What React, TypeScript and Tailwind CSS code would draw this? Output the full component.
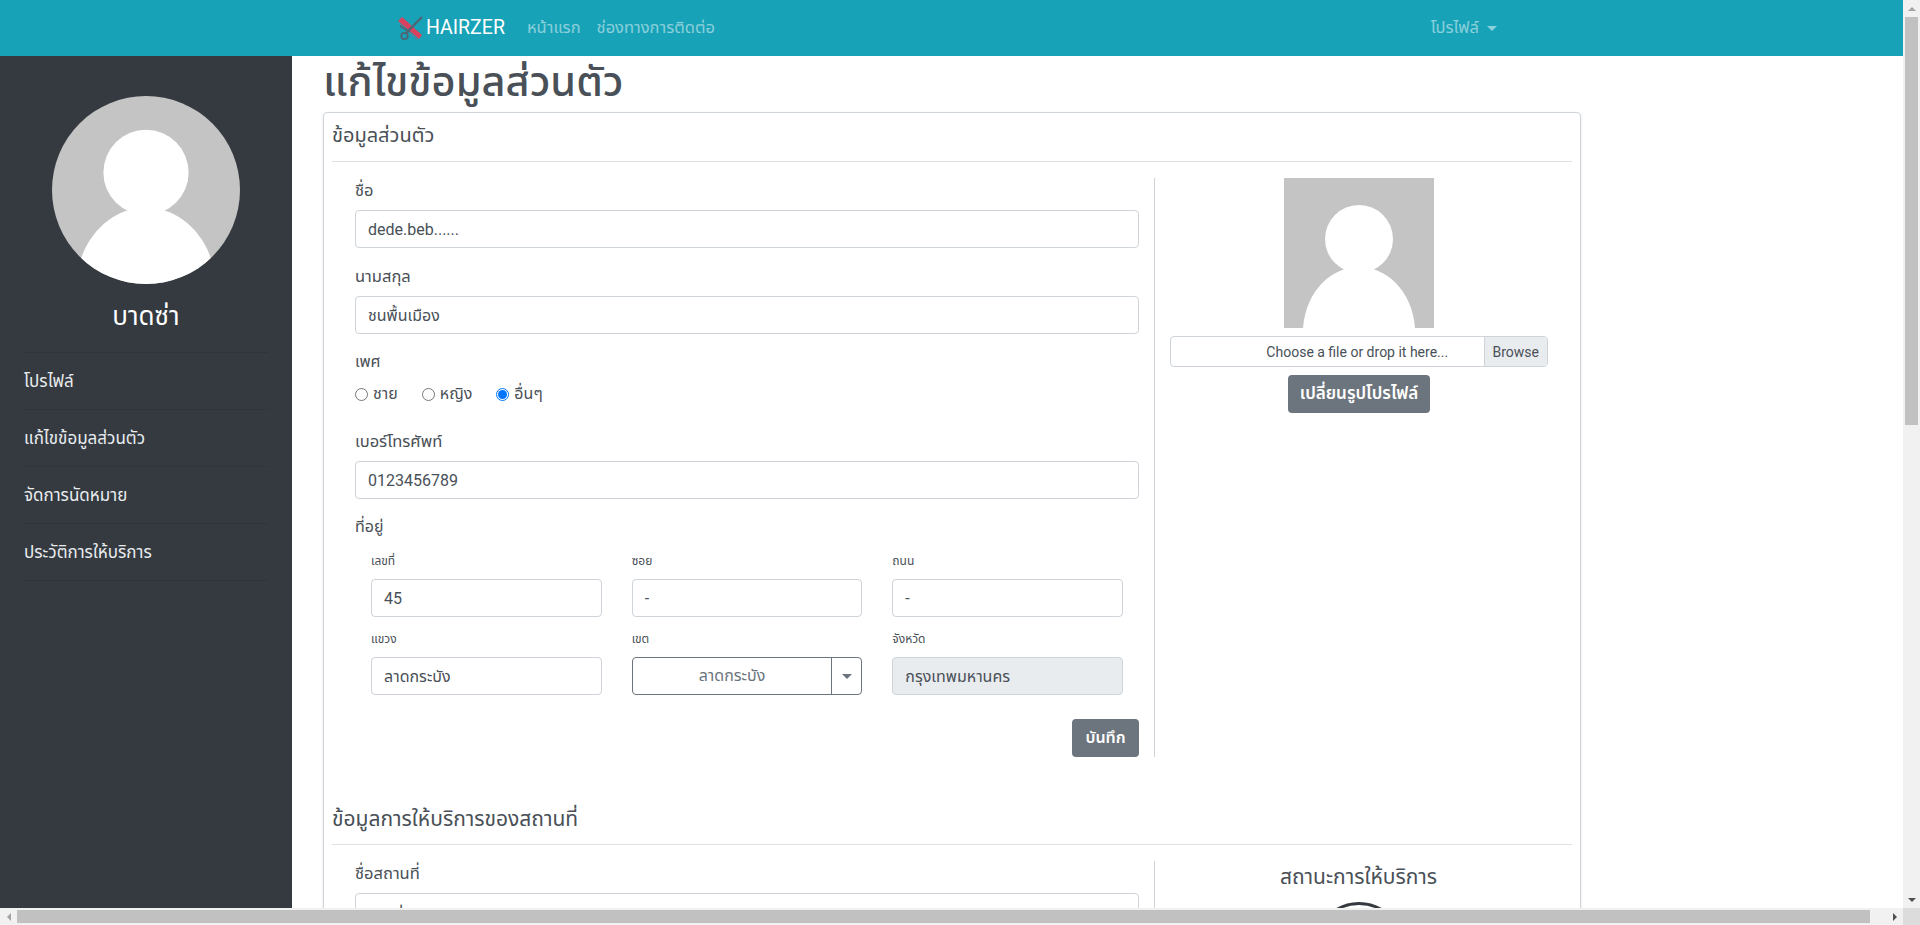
import React from 'react';

const font = { fontFamily: 'Roboto, "Noto Sans Thai", "Noto Sans", "Open Sans", sans-serif' };

const Avatar = () => (
  <svg viewBox="0 0 150 150" className="block h-full w-full">
    <rect width="150" height="150" fill="#c4c4c4" />
    <circle cx="75" cy="61" r="34" fill="#fff" />
    <path d="M19 150 C22 112 48 89 75 89 C102 89 128 112 131 150 Z" fill="#fff" />
  </svg>
);

const Logo = () => (
  <svg viewBox="0 0 26 26" className="h-[26px] w-[26px]">
    <path d="M1 6 L5 2 L25 20 L22 24 Z" fill="#d9425f" />
    <path d="M3 9 L21 25" stroke="#d9425f" strokeWidth="1" strokeDasharray="1 1" />
    <path d="M25 2 L9 18" stroke="#4d6675" strokeWidth="2.4" />
    <path d="M3 11 L13 17" stroke="#4d6675" strokeWidth="1.6" />
    <circle cx="7.5" cy="21" r="3.2" fill="none" stroke="#4d6675" strokeWidth="1.8" />
  </svg>
);

const Field = ({ label, value, className = '' }: { label: string; value: string; className?: string }) => (
  <div className={className}>
    <label className="block h-6 text-[16.5px] leading-[26px] text-[#495057]">{label}</label>
    <div className="mt-2 flex h-[38px] items-center rounded border border-[#ced4da] px-3 pt-px text-base text-[#495057]">{value}</div>
  </div>
);

const SmallField = ({ label, value, disabled }: { label: string; value: string; disabled?: boolean }) => (
  <div>
    <label className="block h-[27px] text-xs leading-[18px] text-[#495057]">{label}</label>
    <div className={`flex h-[38px] items-center rounded border border-[#ced4da] px-3 pt-px text-base text-[#495057] ${disabled ? 'bg-[#e9ecef]' : ''}`}>{value}</div>
  </div>
);

const Radio = ({ label, checked }: { label: string; checked?: boolean }) => (
  <div className="flex items-center gap-[5px] text-base leading-6 text-[#495057]">
    {checked ? (
      <span className="flex h-[13px] w-[13px] items-center justify-center rounded-full border border-[#0075ff]">
        <span className="h-[9px] w-[9px] rounded-full bg-[#0075ff]" />
      </span>
    ) : (
      <span className="h-[13px] w-[13px] rounded-full border border-[#767676]" />
    )}
    {label}
  </div>
);

const menu = ['โปรไฟล์', 'แก้ไขข้อมูลส่วนตัว', 'จัดการนัดหมาย', 'ประวัติการให้บริการ'];

export default function App() {
  return (
    <div className="flex h-[925px] w-[1920px] flex-col overflow-hidden bg-white" style={font}>
      <div className="flex min-h-0 flex-1">
        <div className="flex min-w-0 flex-1 flex-col">
          {/* Navbar */}
          <nav className="flex h-14 shrink-0 items-center bg-[#17a2b8] pl-[397px] pr-[406px]">
            <Logo />
            <span className="ml-[3px] text-[19.5px] text-white">HAIRZER</span>
            <span className="ml-[22px] text-[16.5px] text-white/50">หน้าแรก</span>
            <span className="ml-4 text-[16.5px] text-white/50">ช่องทางการติดต่อ</span>
            <span className="ml-auto flex items-center text-[16.5px] text-white/50">
              โปรไฟล์
              <span className="ml-2 border-x-[5px] border-t-[5px] border-x-transparent border-t-white/50" />
            </span>
          </nav>

          <div className="flex min-h-0 flex-1">
            {/* Sidebar */}
            <aside className="w-[292px] shrink-0 bg-[#343a40] px-6 pt-10">
              <div className="mx-auto h-[188px] w-[188px] overflow-hidden rounded-full">
                <Avatar />
              </div>
              <div className="mt-5 text-center text-[26px] leading-[24px] text-white">บาดซ่า</div>
              <ul className="mt-6 border-t border-[#2f353a]">
                {menu.map(item => (
                  <li key={item} className="flex h-[57px] items-center border-b border-[#2f353a] pt-px text-[17px] text-[#e9ecef]">
                    {item}
                  </li>
                ))}
              </ul>
            </aside>

            {/* Content */}
            <main className="min-w-0 flex-1 overflow-hidden pl-[31px]">
              <h1 className="h-14 text-[41.5px] font-medium leading-[52px] text-[#495057]">แก้ไขข้อมูลส่วนตัว</h1>
              <section className="w-[1258px] rounded border border-[#ced4da] px-2 pb-4 shadow-sm">
                <h2 className="flex h-12 items-center pb-1 text-xl text-[#495057]">ข้อมูลส่วนตัว</h2>
                <hr className="border-[#dee2e6]" />
                <div className="flex pt-4">
                  <div className="w-[823px] border-r border-[#ced4da] pl-[23px] pr-[15px]">
                    <Field label="ชื่อ" value="dede.beb......" />
                    <Field label="นามสกุล" value="ชนพื้นเมือง" className="mt-4" />
                    <div className="mt-4 text-base leading-6 text-[#495057]">เพศ</div>
                    <div className="mt-2 flex gap-6">
                      <Radio label="ชาย" />
                      <Radio label="หญิง" />
                      <Radio label="อื่นๆ" checked />
                    </div>
                    <Field label="เบอร์โทรศัพท์" value="0123456789" className="mt-[23px]" />
                    <div className="mt-4 text-base leading-6 text-[#495057]">ที่อยู่</div>
                    <div className="mt-[13px] grid grid-cols-3 gap-x-[30px] gap-y-[13px] px-4">
                      <SmallField label="เลขที่" value="45" />
                      <SmallField label="ซอย" value="-" />
                      <SmallField label="ถนน" value="-" />
                      <SmallField label="แขวง" value="ลาดกระบัง" />
                      <div>
                        <label className="block h-[27px] text-xs leading-[18px] text-[#495057]">เขต</label>
                        <div className="flex h-[38px] rounded border border-[#6c757d] text-base text-[#6c757d]">
                          <div className="flex flex-1 items-center justify-center">ลาดกระบัง</div>
                          <div className="flex w-[30px] items-center justify-center border-l border-[#6c757d]">
                            <span className="border-x-[5px] border-t-[5px] border-x-transparent border-t-[#6c757d]" />
                          </div>
                        </div>
                      </div>
                      <SmallField label="จังหวัด" value="กรุงเทพมหานคร" disabled />
                    </div>
                    <div className="mt-6 flex justify-end">
                      <button className="h-[38px] w-[67px] rounded bg-[#6c757d] text-base font-semibold text-white">บันทึก</button>
                    </div>
                  </div>
                  <div className="flex flex-1 flex-col items-center pl-[15px] pr-[24px]">
                    <div className="h-[150px] w-[150px]">
                      <Avatar />
                    </div>
                    <div className="mt-2 flex h-[31px] w-full rounded border border-[#ced4da] text-sm text-[#495057]">
                      <div className="flex flex-1 items-center justify-center pl-[60px]">Choose a file or drop it here...</div>
                      <div className="flex items-center border-l border-[#ced4da] bg-[#e9ecef] px-2">Browse</div>
                    </div>
                    <button className="mt-2 h-[38px] w-[142px] rounded bg-[#6c757d] text-[17px] font-semibold text-white">เปลี่ยนรูปโปรไฟล์</button>
                  </div>
                </div>

                <h2 className="mt-[39px] flex h-12 items-center text-[21px] text-[#495057]">ข้อมูลการให้บริการของสถานที่</h2>
                <hr className="border-[#dee2e6]" />
                <div className="flex pt-4">
                  <div className="w-[823px] border-r border-[#ced4da] pl-[23px] pr-[15px]">
                    <Field label="ชื่อสถานที่" value="บาดซ่า" />
                  </div>
                  <div className="flex flex-1 flex-col items-center pr-[10px]">
                    <div className="mt-1 text-[21px] leading-6 text-[#495057]">สถานะการให้บริการ</div>
                    <div className="mt-[13px] h-[90px] w-[90px] shrink-0 rounded-full border-[3px] border-[#343a40]" />
                  </div>
                </div>
              </section>
            </main>
          </div>
        </div>

        {/* Vertical scrollbar */}
        <div className="flex w-[17px] shrink-0 flex-col items-center bg-[#f1f1f1]">
          <div className="flex h-[17px] items-center justify-center">
            <span className="border-x-[4px] border-b-[4px] border-x-transparent border-b-[#a3a3a3]" />
          </div>
          <div className="h-[408px] w-[13px] bg-[#c1c1c1]" />
          <div className="flex-1" />
          <div className="flex h-[17px] items-center justify-center">
            <span className="border-x-[4px] border-t-[4px] border-x-transparent border-t-[#505050]" />
          </div>
        </div>
      </div>

      {/* Horizontal scrollbar */}
      <div className="flex h-[17px] shrink-0 items-center bg-[#f1f1f1]">
        <div className="flex w-[17px] items-center justify-center">
          <span className="border-y-[4px] border-r-[4px] border-y-transparent border-r-[#a3a3a3]" />
        </div>
        <div className="h-[13px] w-[1853px] bg-[#c1c1c1]" />
        <div className="flex-1" />
        <div className="flex w-[17px] items-center justify-center">
          <span className="border-y-[4px] border-l-[4px] border-y-transparent border-l-[#505050]" />
        </div>
        <div className="h-[17px] w-[17px] bg-[#dcdcdc]" />
      </div>
    </div>
  );
}
